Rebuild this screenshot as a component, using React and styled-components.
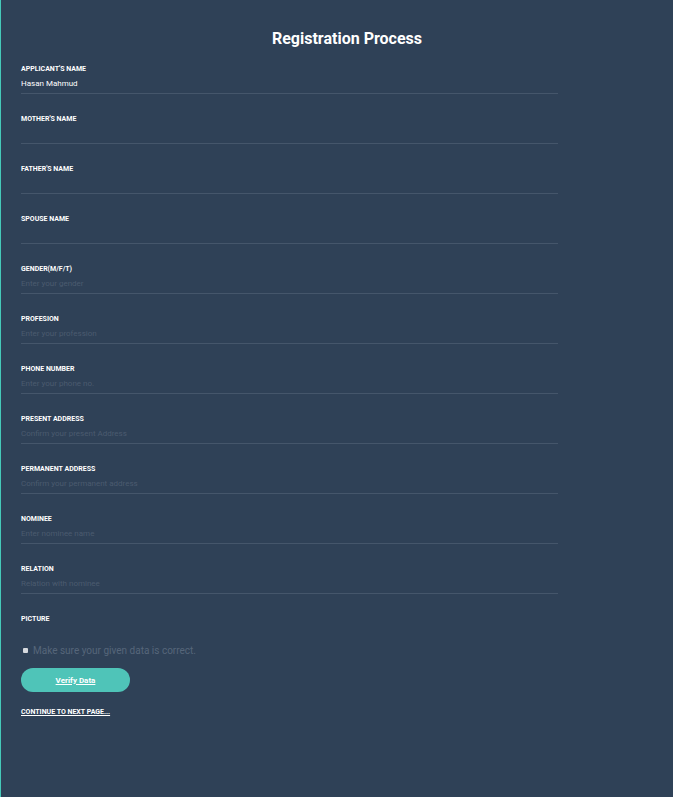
import React from 'react'
import styled, { createGlobalStyle } from 'styled-components';

const GlobalStyle = createGlobalStyle`
    html, body {
        margin: 0;
        padding: 0;
        background: #2f4157;
    }
    #root {
        min-height: 797px;
    }
`;

const fields = [
    { label: "Applicant's Name", value: 'Hasan Mahmud' },
    { label: "Mother's Name" },
    { label: "Father's Name" },
    { label: 'Spouse Name' },
    { label: 'Gender(M/F/T)', placeholder: 'Enter your gender' },
    { label: 'Profesion', placeholder: 'Enter your profession' },
    { label: 'Phone Number', placeholder: 'Enter your phone no.' },
    { label: 'Present Address', placeholder: 'Confirm your present Address' },
    { label: 'Permanent Address', placeholder: 'Confirm your permanent address' },
    { label: 'Nominee', placeholder: 'Enter nominee name' },
    { label: 'Relation', placeholder: 'Relation with nominee' },
];

const App = () => {
    return (
        <Page>
            <GlobalStyle />
            <Title>Registration Process</Title>
            <Form onSubmit={e => e.preventDefault()}>
                {fields.map(field => (
                    <Field key={field.label}>
                        <Label>{field.label}</Label>
                        <Input defaultValue={field.value} placeholder={field.placeholder} />
                    </Field>
                ))}
                <PictureField>
                    <Label>Picture</Label>
                </PictureField>
                <CheckRow>
                    <Box />
                    <CheckText>Make sure your given data is correct.</CheckText>
                </CheckRow>
                <VerifyButton type="submit">Verify Data</VerifyButton>
                <NextLink href="#">Continue to next page...</NextLink>
            </Form>
        </Page>
    )
}

const Page = styled.div`
    min-height: 797px;
    box-sizing: border-box;
    border-left: 1px solid #45c9b9;
    padding: 29px 0 40px 20px;
    font-family: Roboto, "Noto Sans", sans-serif;
`;

const Title = styled.h1`
    margin: 0 0 14px 0;
    font-size: 16px;
    line-height: 20px;
    font-weight: 700;
    color: #ffffff;
    text-align: center;
`;

const Form = styled.form`
    display: flex;
    flex-direction: column;
    align-items: flex-start;
`;

const Field = styled.div`
    display: flex;
    flex-direction: column;
    width: 537px;
    margin-bottom: 19px;
`;

const PictureField = styled(Field)`
    margin-bottom: 20px;
`;

const Label = styled.label`
    padding-top: 1px;
    font-size: 7px;
    line-height: 10px;
    font-weight: 700;
    text-transform: uppercase;
    color: #ffffff;
`;

const Input = styled.input`
    height: 19px;
    padding: 0;
    border: none;
    border-bottom: 1px solid #45566b;
    background: transparent;
    color: #ffffff;
    font-family: Roboto, "Noto Sans", sans-serif;
    font-size: 8px;
    outline: none;

    &::placeholder {
        color: #4b5b6f;
    }
`;

const CheckRow = styled.div`
    display: flex;
    align-items: center;
    gap: 5px;
    height: 12px;
    margin-left: 2px;
    margin-bottom: 12px;
`;

const Box = styled.span`
    width: 5px;
    height: 5px;
    background: #d6d9de;
    border-radius: 1px;
`;

const CheckText = styled.span`
    font-size: 10px;
    color: #56667a;
`;

const VerifyButton = styled.button`
    width: 109px;
    height: 24px;
    border: none;
    border-radius: 12px;
    background: #4fc4b8;
    color: #ffffff;
    font-family: Roboto, "Noto Sans", sans-serif;
    font-size: 8px;
    font-weight: 700;
    text-decoration: underline;
    cursor: pointer;
    margin-bottom: 16px;
`;

const NextLink = styled.a`
    font-size: 7px;
    font-weight: 700;
    text-transform: uppercase;
    color: #ffffff;
    text-decoration: underline;
`;

export default App
